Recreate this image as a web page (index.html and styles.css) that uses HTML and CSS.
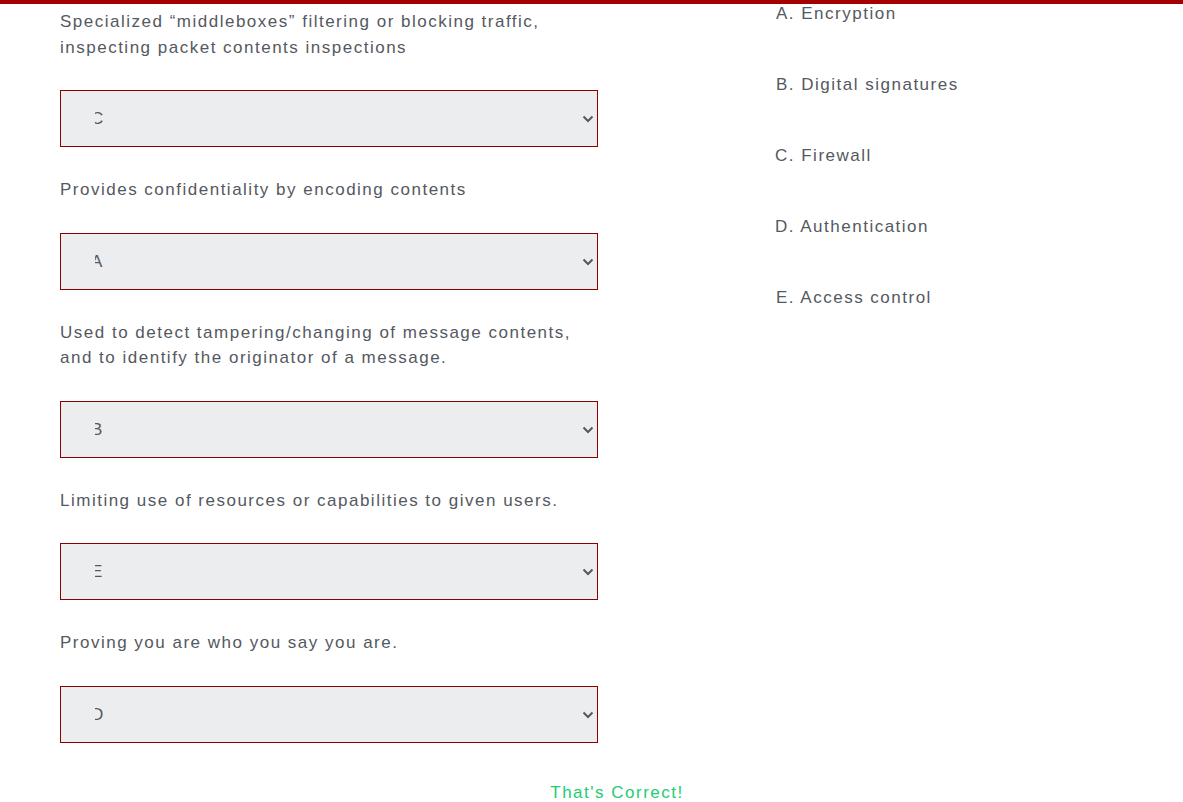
FILE: index.html
```html
<!DOCTYPE html>
<html>
<head>
<meta charset="utf-8">
<link rel="stylesheet" href="styles.css">
</head>
<body>
<div class="topbar"></div>
<div class="page">
  <div class="quiz">
    <div class="questions">
      <div class="q">
        <p class="q-text">Specialized “middleboxes” filtering or blocking traffic, inspecting packet contents inspections</p>
        <div class="select-wrap">
          <select class="answer"><option>C</option><option>A</option><option>B</option><option>D</option><option>E</option></select>
          <svg class="chev" width="12" height="8" viewBox="0 0 12 8"><path d="M1.5 1.5 L6 6 L10.5 1.5" fill="none" stroke="#54595f" stroke-width="2"/></svg>
        </div>
      </div>
      <div class="q">
        <p class="q-text">Provides confidentiality by encoding contents</p>
        <div class="select-wrap">
          <select class="answer"><option>A</option><option>B</option><option>C</option><option>D</option><option>E</option></select>
          <svg class="chev" width="12" height="8" viewBox="0 0 12 8"><path d="M1.5 1.5 L6 6 L10.5 1.5" fill="none" stroke="#54595f" stroke-width="2"/></svg>
        </div>
      </div>
      <div class="q">
        <p class="q-text">Used to detect tampering/changing of message contents, and to identify the originator of a message.</p>
        <div class="select-wrap">
          <select class="answer"><option>B</option><option>A</option><option>C</option><option>D</option><option>E</option></select>
          <svg class="chev" width="12" height="8" viewBox="0 0 12 8"><path d="M1.5 1.5 L6 6 L10.5 1.5" fill="none" stroke="#54595f" stroke-width="2"/></svg>
        </div>
      </div>
      <div class="q">
        <p class="q-text">Limiting use of resources or capabilities to given users.</p>
        <div class="select-wrap">
          <select class="answer"><option>E</option><option>A</option><option>B</option><option>C</option><option>D</option></select>
          <svg class="chev" width="12" height="8" viewBox="0 0 12 8"><path d="M1.5 1.5 L6 6 L10.5 1.5" fill="none" stroke="#54595f" stroke-width="2"/></svg>
        </div>
      </div>
      <div class="q">
        <p class="q-text">Proving you are who you say you are.</p>
        <div class="select-wrap">
          <select class="answer"><option>D</option><option>A</option><option>B</option><option>C</option><option>E</option></select>
          <svg class="chev" width="12" height="8" viewBox="0 0 12 8"><path d="M1.5 1.5 L6 6 L10.5 1.5" fill="none" stroke="#54595f" stroke-width="2"/></svg>
        </div>
      </div>
    </div>
    <ul class="options">
      <li class="opt">A. Encryption</li>
      <li class="opt">B. Digital signatures</li>
      <li class="opt opt-shift">C. Firewall</li>
      <li class="opt opt-shift">D. Authentication</li>
      <li class="opt">E. Access control</li>
    </ul>
  </div>
  <p class="result">That's Correct!</p>
</div>
</body>
</html>
```
FILE: styles.css
```css
html, body {
  margin: 0;
  padding: 0;
  background: #fff;
}
body {
  font-family: "Liberation Sans", Arial, sans-serif;
  font-size: 17px;
  letter-spacing: 1.5px;
  color: #54595f;
}
.topbar {
  position: fixed;
  top: 0;
  left: 0;
  right: 0;
  height: 4px;
  background: #a50000;
  z-index: 10;
}
.page {
  padding: 9px 9px 0 60px;
}
.quiz {
  display: flex;
  align-items: flex-start;
}
.questions {
  width: 538px;
  flex: none;
}
.q-text {
  margin: 0;
  line-height: 25.5px;
}
.select-wrap {
  position: relative;
  margin: 30px 0;
}
.answer {
  display: block;
  -webkit-appearance: none;
  appearance: none;
  width: 538px;
  height: 57px;
  margin: 0;
  padding: 0 24px 0 34px;
  text-indent: -4px;
  border: 1px solid #8b0000;
  border-radius: 0;
  background: #ecedef;
  color: #54595f;
  font-family: "Liberation Sans", Arial, sans-serif;
  font-size: 17px;
  letter-spacing: 0;
}
.chev {
  position: absolute;
  right: 4px;
  top: 25px;
  pointer-events: none;
}
.options {
  list-style: none;
  margin: -7.75px 0 0 178px;
  padding: 0;
}
.opt {
  line-height: 25.5px;
  margin-bottom: 45.5px;
}
.opt-shift {
  margin-left: -1px;
}
.result {
  margin: 7px 0 0;
  text-align: center;
  color: #21ce72;
  line-height: 25.5px;
}
```
